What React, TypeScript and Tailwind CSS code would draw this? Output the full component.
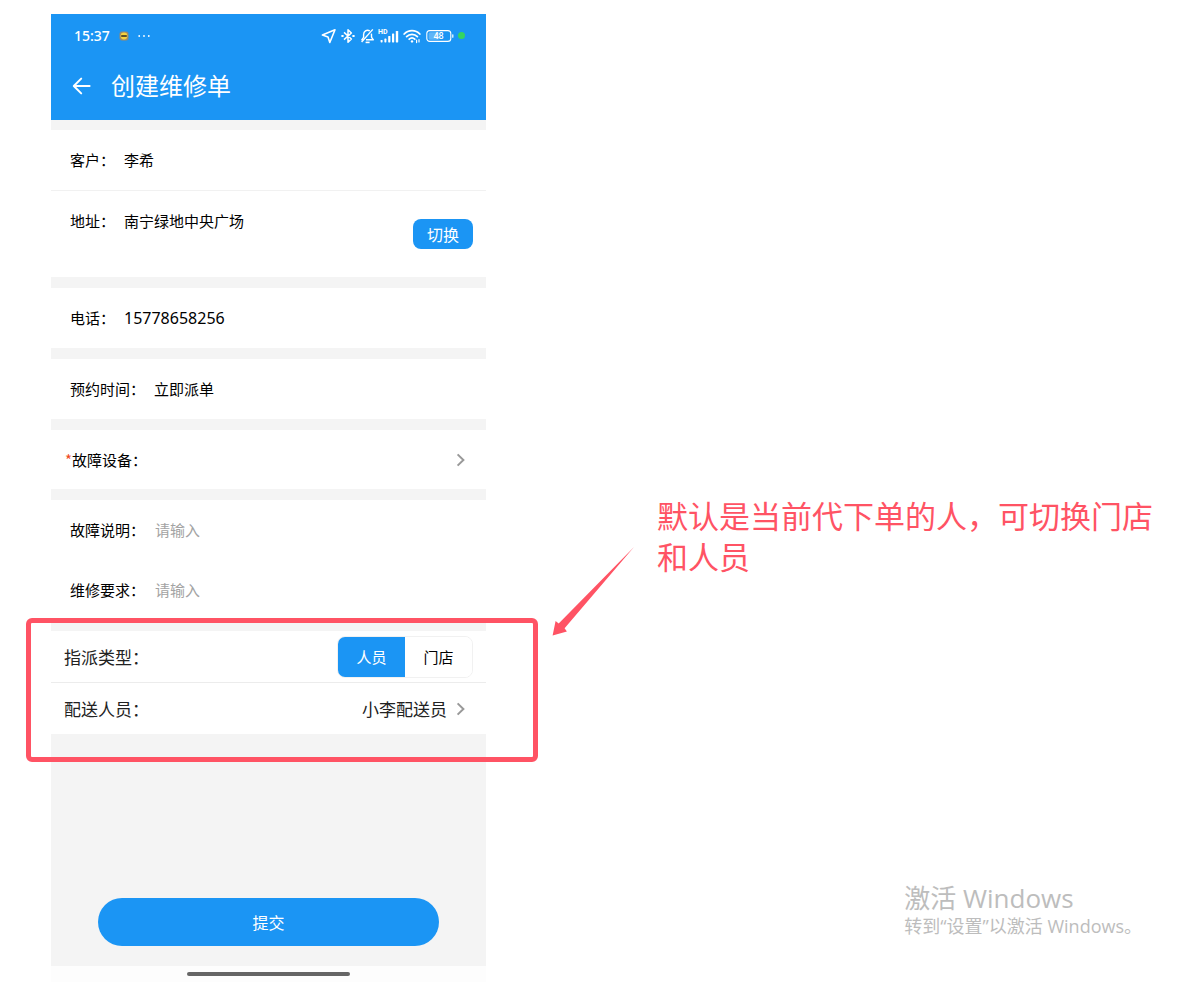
import { useState, type ReactNode } from 'react';

type AssignType = 'person' | 'store';

function StatusBar() {
  return (
    <div className="flex h-[43px] items-center justify-between pl-[23px] pr-[21px]">
      <div className="flex items-center">
        <span className="font-['Noto_Sans'] text-sm font-medium">15:37</span>
        <svg className="ml-[9px] h-[10px] w-[10px]" viewBox="0 0 10 10" aria-hidden="true">
          <rect x="0.5" y="0.5" width="9" height="9" rx="2.5" fill="#9c8a6c" />
          <circle cx="5" cy="5" r="3.4" fill="#f7d23c" />
          <rect x="2.2" y="4.2" width="5.6" height="1.6" fill="#3b3324" />
        </svg>
        <svg className="ml-[9px] h-1 w-3" viewBox="0 0 12 4" fill="#fff" aria-hidden="true">
          <circle cx="1.2" cy="2" r="0.9" />
          <circle cx="6" cy="2" r="0.9" />
          <circle cx="10.8" cy="2" r="0.9" />
        </svg>
      </div>

      <div className="flex items-center">
        {/* location */}
        <svg className="h-4 w-4" viewBox="0 0 16 16" fill="none" stroke="#fff" strokeWidth="1.6" strokeLinejoin="round" aria-hidden="true">
          <path d="M1.4 7.1 14 1.8 8.8 14.5 7 9Z" />
        </svg>
        {/* bluetooth */}
        <svg className="ml-1 h-4 w-[14px]" viewBox="0 0 14 16" fill="none" stroke="#fff" strokeWidth="1.5" strokeLinejoin="round" aria-hidden="true">
          <path d="M3 4.4 10.4 11 7 14.3V1.7L10.4 5 3 11.6" />
          <path d="M0.4 8h2.2M11.4 8h2.2" strokeWidth="1.8" />
        </svg>
        {/* muted bell */}
        <svg className="ml-[5px] h-4 w-4" viewBox="0 0 16 16" fill="none" stroke="#fff" strokeWidth="1.4" strokeLinejoin="round" aria-hidden="true">
          <path d="M9.8 2.9C6.6 1 3.6 3.6 3.6 6.6v2.8l-1.8 2.4h1.6M11.4 5.6c.2 1.6 0 3 .2 3.8l1.8 2.4H6" />
          <path d="M1.6 14 12.8 1.4" />
          <path d="M5.6 14.4h4" strokeWidth="1.6" />
        </svg>
        {/* signal */}
        <svg className="ml-[2px] h-4 w-[21px]" viewBox="0 0 21 16" fill="#fff" aria-hidden="true">
          <text x="0" y="6.4" fontSize="7" fontWeight="700" fontFamily="Roboto, sans-serif">HD</text>
          <rect x="2.6" y="12" width="2" height="2.4" rx="0.6" />
          <rect x="6.4" y="10.6" width="2" height="3.8" rx="0.6" />
          <rect x="10.2" y="8" width="2.2" height="6.4" rx="0.6" />
          <rect x="14" y="5.4" width="2.2" height="9" rx="0.6" />
          <rect x="17.8" y="3" width="2.4" height="11.4" rx="0.6" />
        </svg>
        {/* wifi */}
        <svg className="ml-1 h-4 w-[18px]" viewBox="0 0 18 16" fill="none" stroke="#fff" strokeWidth="1.8" strokeLinecap="round" aria-hidden="true">
          <path d="M1.2 6C5.4 1.4 12.6 1.4 16.8 6" />
          <path d="M3.6 8.6c3-3.1 7.8-3.1 10.8 0" />
          <path d="M6.2 11.2c1.7-1.6 3.9-1.6 5.6 0" />
          <circle cx="9" cy="13.4" r="1.2" fill="#fff" stroke="none" />
          <path d="M13.6 12.2v2.4M16 11.6v2.4" strokeWidth="1.2" />
        </svg>
        {/* battery */}
        <svg className="ml-[5px] h-4 w-7" viewBox="0 0 28 16" fill="none" aria-hidden="true">
          <rect x="0.8" y="2.6" width="24" height="10.8" rx="3" stroke="#fff" strokeWidth="1.1" />
          <rect x="2.6" y="4.2" width="11" height="7.6" rx="1.6" fill="#fff" fillOpacity="0.3" />
          <path d="M26.8 6.8v2.4" stroke="#fff" strokeWidth="1.2" strokeLinecap="round" />
          <text x="12.6" y="11.3" fill="#fff" fontSize="9" fontWeight="500" textAnchor="middle" fontFamily="Roboto, sans-serif">48</text>
        </svg>
        <span className="ml-1 h-[7px] w-[7px] rounded-full bg-[#35d461]" />
      </div>
    </div>
  );
}

function Chevron() {
  return (
    <svg className="h-4 w-[10px]" viewBox="0 0 10 16" fill="none" stroke="#999" strokeWidth="2" aria-hidden="true">
      <path d="M1.6 2.4 7.4 8 1.6 13.6" />
    </svg>
  );
}

function Row({ label, children }: { label: string; children: ReactNode }) {
  return (
    <div className="flex h-[60px] items-center gap-[9px] bg-white pl-[19px]">
      <span>{label}</span>
      {children}
    </div>
  );
}

function InputRow({ id, label }: { id: string; label: string }) {
  return (
    <div className="flex h-[60px] items-center gap-[10px] bg-white pl-[19px] pr-3">
      <label htmlFor={id}>{label}</label>
      <input id={id} placeholder="请输入" className="min-w-0 flex-1 outline-none placeholder:text-[#a3a3a3]" />
    </div>
  );
}

export default function App() {
  const [assignType, setAssignType] = useState<AssignType>('person');

  const tab = (active: boolean) =>
    active ? 'flex-1 bg-[#1b95f4] text-white' : 'flex-1 bg-white text-black';

  return (
    <div className="flex bg-white pb-1 pl-[51px] pt-[14px] font-['Noto_Sans_CJK_SC',sans-serif] text-[15px] leading-6 text-black">
      {/* Phone screen */}
      <main className="flex w-[435px] shrink-0 flex-col bg-[#f4f4f4]">
        <header className="h-[106px] bg-[#1b95f4] text-white">
          <StatusBar />
          <div className="flex h-[55px] items-center gap-[19px] pl-[21px]">
            <button type="button" aria-label="返回">
              <svg className="h-5 w-5" viewBox="0 0 20 20" fill="none" stroke="#fff" strokeWidth="2" strokeLinecap="round" strokeLinejoin="round" aria-hidden="true">
                <path d="M17.6 11H2M9.2 3.6 1.8 11l7.4 7.4" />
              </svg>
            </button>
            <h1 className="text-2xl">创建维修单</h1>
          </div>
        </header>

        <div className="mt-[10px] flex flex-col gap-[11px]">
          <section>
            <Row label="客户：">
              <span>李希</span>
            </Row>
            <div className="flex h-[87px] items-center border-t border-[#f1f1f1] bg-white pr-[13px]">
              <div className="flex-1 self-start">
                <Row label="地址：">
                  <span>南宁绿地中央广场</span>
                </Row>
              </div>
              <button type="button" className="h-[30px] w-[60px] rounded-lg bg-[#1b95f4] text-base text-white">切换</button>
            </div>
          </section>

          <Row label="电话：">
            <span className="font-['Noto_Sans'] text-base">15778658256</span>
          </Row>

          <Row label="预约时间：">
            <span>立即派单</span>
          </Row>

          <button type="button" className="flex h-[59px] items-center bg-white pl-[14px] pr-5">
            <span className="text-[#f04a1d]">*</span>
            <span className="flex-1 text-left">故障设备：</span>
            <Chevron />
          </button>

          <section>
            <InputRow id="fault" label="故障说明：" />
            <InputRow id="request" label="维修要求：" />
          </section>

          {/* Assignment, outlined by the note */}
          <section className="relative text-[17px] text-[#222]">
            <div className="flex h-[52px] items-center justify-between border-b border-[#ececec] bg-white pl-[13px] pr-[13px]">
              <span>指派类型：</span>
              <div className="flex h-[42px] w-[136px] overflow-hidden rounded-lg border border-[#f1f1f1] text-[15px]">
                <button type="button" aria-pressed={assignType === 'person'} onClick={() => setAssignType('person')} className={tab(assignType === 'person')}>
                  人员
                </button>
                <button type="button" aria-pressed={assignType === 'store'} onClick={() => setAssignType('store')} className={tab(assignType === 'store')}>
                  门店
                </button>
              </div>
            </div>
            <button type="button" className="flex h-[51px] w-full items-center bg-white pl-[13px] pr-5">
              <span className="flex-1 text-left">配送人员：</span>
              <span className="mr-[9px]">小李配送员</span>
              <Chevron />
            </button>
            <div className="pointer-events-none absolute -bottom-7 -left-[25px] -right-[52px] -top-[13px] rounded-md border-[5px] border-[#ff5364]" />
          </section>
        </div>

        <div className="mt-auto px-[47px] pb-5 pt-[164px]">
          <button type="button" className="h-12 w-full rounded-full bg-[#1b95f4] text-base text-white">提交</button>
        </div>
        <div className="flex h-4 items-center justify-center bg-[#fdfdfd]">
          <div className="h-1 w-[163px] rounded-full bg-[#666]" />
        </div>
      </main>

      {/* Note and watermark */}
      <aside className="flex min-w-0 flex-1 flex-col justify-between pb-11 pl-[66px] pr-6 pt-[480px]">
        <div className="flex items-start gap-[23px] text-[#ff5364]">
          <svg className="mt-[51px] h-[92px] w-[82px] shrink-0" viewBox="0 0 82 92" fill="currentColor" aria-hidden="true">
            <path d="M82 2 12.6 83.2 14.9 86.6 0.6 90.6 3.6 76 6.7 78.4Z" />
          </svg>
          <p className="min-w-0 text-[31px] leading-[41px]">默认是当前代下单的人，可切换门店和人员</p>
        </div>
        <div className="self-end pr-[30px] font-['Open_Sans','Noto_Sans_CJK_SC',sans-serif] text-[#bdbdbd]">
          <p className="text-[26px] leading-8">激活 Windows</p>
          <p className="text-lg leading-6">转到“设置”以激活 Windows。</p>
        </div>
      </aside>
    </div>
  );
}
